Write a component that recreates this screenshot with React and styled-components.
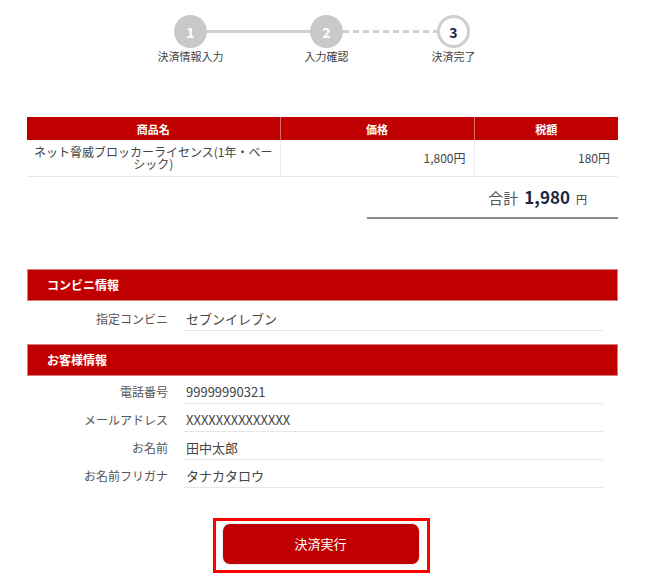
import React from "react";
import styled, { createGlobalStyle } from "styled-components";

const GlobalStyle = createGlobalStyle`
  body {
    margin: 0;
    background: #fff;
    font-family: "Noto Sans CJK JP", "Noto Sans", sans-serif;
    color: #444;
  }
`;

const Page = styled.div`
  width: 650px;
  padding: 15px 32px 0 27px;
  box-sizing: border-box;
`;

const Stepper = styled.div`
  display: flex;
  align-items: flex-start;
  margin-left: 147px;
`;

const Step = styled.div`
  width: 33px;
  display: flex;
  flex-direction: column;
  align-items: center;
`;

const Circle = styled.div`
  width: 33px;
  height: 33px;
  border-radius: 50%;
  box-sizing: border-box;
  display: flex;
  align-items: center;
  justify-content: center;
  font-size: 14px;
  font-weight: bold;
  background: ${(p) => (p.$current ? "#fff" : "#c9c9c9")};
  border: ${(p) => (p.$current ? "3px solid #cfcfcf" : "none")};
  color: ${(p) => (p.$current ? "#1c2744" : "#fff")};
`;

const StepLabel = styled.div`
  margin-top: 1px;
  font-size: 11px;
  line-height: 14px;
  white-space: nowrap;
  color: #444;
`;

const Connector = styled.div`
  width: ${(p) => p.$w}px;
  height: 3px;
  margin-top: 15px;
  background: ${(p) =>
    p.$dashed
      ? "repeating-linear-gradient(90deg, #cfcfcf 0 6px, transparent 6px 10px)"
      : "#cfcfcf"};
`;

const Table = styled.table`
  width: 100%;
  margin-top: 54px;
  border-collapse: collapse;
  table-layout: fixed;
`;

const Th = styled.th`
  background: #c00000;
  color: #fff;
  font-size: 11px;
  font-weight: bold;
  height: 23px;
  padding: 0;
  border-left: 1px solid #d86a6a;
  &:first-child {
    border-left: none;
  }
`;

const Td = styled.td`
  font-size: 12px;
  line-height: 12px;
  height: 36px;
  box-sizing: border-box;
  padding: ${(p) => (p.$right ? "0 8px" : "0 5px")};
  text-align: ${(p) => (p.$right ? "right" : "center")};
  color: #444;
  border-bottom: 1px solid #e6e6e6;
  border-left: 1px solid #ececec;
  &:first-child {
    border-left: none;
  }
`;

const TotalWrap = styled.div`
  display: flex;
  justify-content: flex-end;
`;

const Total = styled.div`
  width: 251px;
  box-sizing: border-box;
  display: flex;
  justify-content: flex-end;
  align-items: baseline;
  gap: 6px;
  line-height: 20px;
  padding: 10px 31px 8px 0;
  border-bottom: 2px solid #8a8a8a;
`;

const TotalLabel = styled.span`
  font-size: 15px;
  color: #555;
`;

const TotalValue = styled.span`
  font-size: 17px;
  font-weight: bold;
  color: #1c2744;
`;

const TotalUnit = styled.span`
  font-size: 11px;
  color: #333;
`;

const Section = styled.div`
  margin-top: ${(p) => p.$top}px;
`;

const SectionHead = styled.div`
  height: 32px;
  box-sizing: border-box;
  background: #c00000;
  border: 1px solid #d97c7c;
  color: #fff;
  font-size: 12px;
  font-weight: bold;
  display: flex;
  align-items: center;
  padding-left: 19px;
`;

const Row = styled.div`
  display: grid;
  grid-template-columns: 141px 1fr;
  column-gap: 15px;
  margin-right: 15px;
`;

const Label = styled.div`
  text-align: right;
  font-size: 12px;
  color: #555;
  padding-top: ${(p) => p.$pt}px;
  line-height: 14px;
`;

const Value = styled.div`
  font-size: 13px;
  color: #444;
  line-height: 14px;
  padding: ${(p) => p.$pt}px 0 4px 3px;
  border-bottom: 1px solid #e6e6e6;
`;

const Actions = styled.div`
  display: flex;
  justify-content: center;
  margin: 30px 0 0 -3px;
`;

const Highlight = styled.div`
  border: 3px solid #ff0000;
  padding: 3px 8px 6px 7px;
`;

const Button = styled.button`
  width: 196px;
  height: 40px;
  border: none;
  border-radius: 7px;
  background: #c00000;
  color: #fff;
  font-family: inherit;
  font-size: 13px;
  box-shadow: 0 0 2px rgba(0, 0, 0, 0.25);
  display: block;
`;

const customer = [
  ["電話番号", "99999990321"],
  ["メールアドレス", "XXXXXXXXXXXXXX"],
  ["お名前", "田中太郎"],
  ["お名前フリガナ", "タナカタロウ"],
];

export default function App() {
  return (
    <>
      <GlobalStyle />
      <Page>
        <Stepper>
          <Step>
            <Circle>1</Circle>
            <StepLabel>決済情報入力</StepLabel>
          </Step>
          <Connector $w={103} />
          <Step>
            <Circle>2</Circle>
            <StepLabel>入力確認</StepLabel>
          </Step>
          <Connector $w={94} $dashed />
          <Step>
            <Circle $current>3</Circle>
            <StepLabel>決済完了</StepLabel>
          </Step>
        </Stepper>

        <Table>
          <colgroup>
            <col style={{ width: 253 }} />
            <col style={{ width: 194 }} />
            <col />
          </colgroup>
          <thead>
            <tr>
              <Th>商品名</Th>
              <Th>価格</Th>
              <Th>税額</Th>
            </tr>
          </thead>
          <tbody>
            <tr>
              <Td>ネット脅威ブロッカーライセンス(1年・ベーシック)</Td>
              <Td $right>1,800円</Td>
              <Td $right>180円</Td>
            </tr>
          </tbody>
        </Table>

        <TotalWrap>
          <Total>
            <TotalLabel>合計</TotalLabel>
            <TotalValue>1,980</TotalValue>
            <TotalUnit>円</TotalUnit>
          </Total>
        </TotalWrap>

        <Section $top={50}>
          <SectionHead>コンビニ情報</SectionHead>
          <Row>
            <Label $pt={11}>指定コンビニ</Label>
            <Value $pt={11}>セブンイレブン</Value>
          </Row>
        </Section>

        <Section $top={13}>
          <SectionHead>お客様情報</SectionHead>
          {customer.map(([k, v]) => (
            <Row key={k}>
              <Label $pt={9}>{k}</Label>
              <Value $pt={9}>{v}</Value>
            </Row>
          ))}
        </Section>

        <Actions>
          <Highlight>
            <Button>決済実行</Button>
          </Highlight>
        </Actions>
      </Page>
    </>
  );
}
